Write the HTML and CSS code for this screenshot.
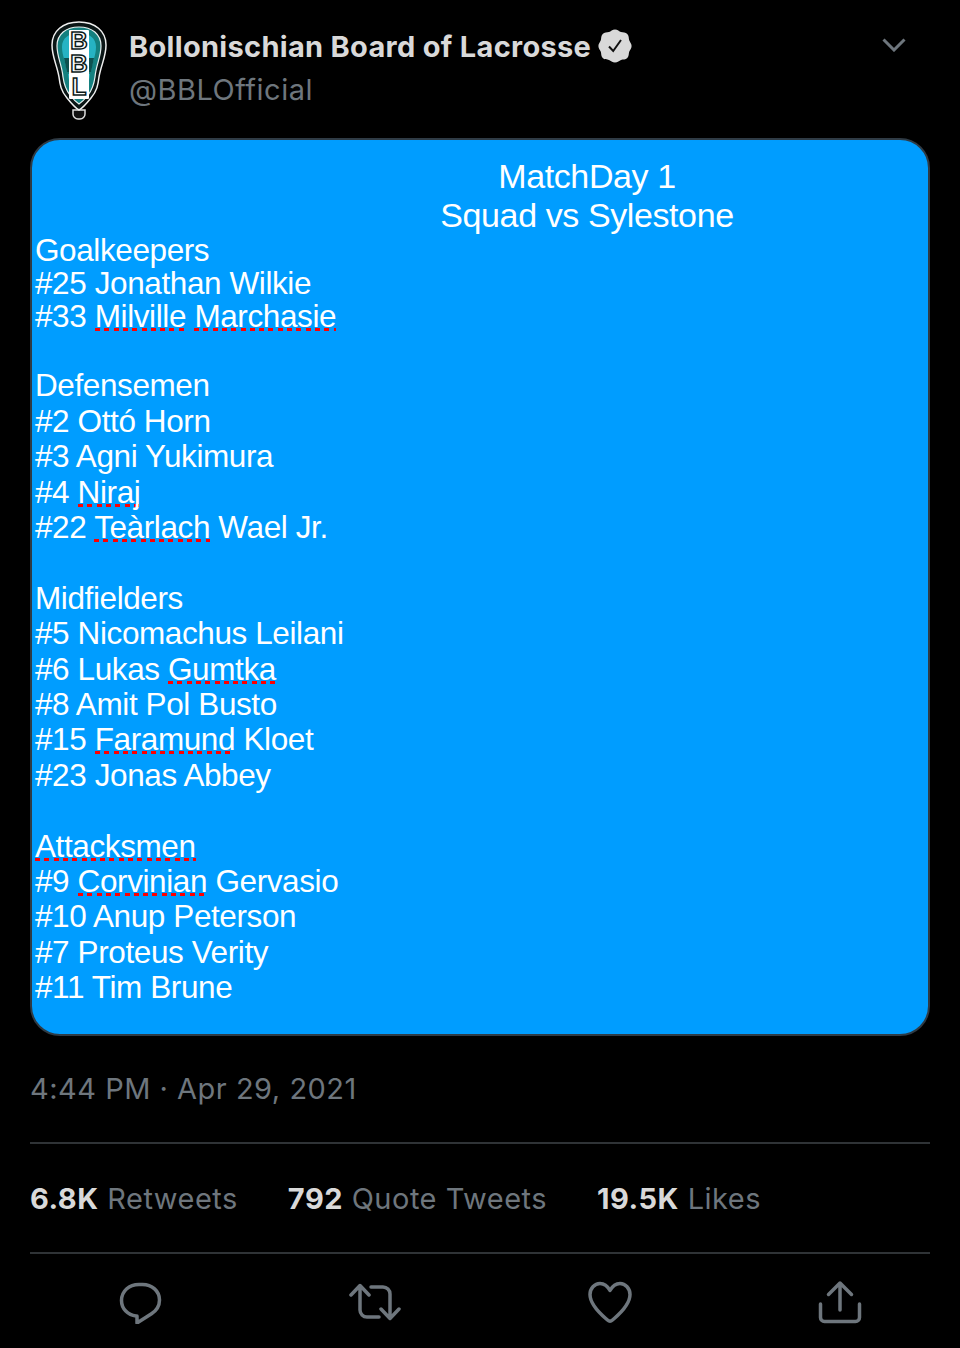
FILE: index.html
```html
<!DOCTYPE html>
<html lang="en">
<head>
<meta charset="utf-8">
<title>Tweet</title>
<link rel="stylesheet" href="styles.css">
</head>
<body>
<main class="tweet">
  <header class="head">
    <svg class="logo" viewBox="0 0 60 100" width="60" height="100">
      <path class="logo-tab" d="M24 90h12v4a5 5 0 0 1-5 5h-2a5 5 0 0 1-5-5z"/>
      <path class="logo-outer" d="M30 2C14 2 3 11 3 25c0 12 5 20 7 32 1 8 2 14 8 21 4 5 8 10 12 12 4-2 8-7 12-12 6-7 7-13 8-21 2-12 7-20 7-32C57 11 46 2 30 2z"/>
      <path class="logo-teal" d="M30 7C17 7 8 14 8 26c0 11 5 19 6 31 1 7 2 12 7 18 3 4 6 7 9 9 3-2 6-5 9-9 5-6 6-11 7-18 1-12 6-20 6-31C52 14 43 7 30 7z"/>
      <path class="logo-light" d="M30 13c-10 0-17 5-17 14 0 9 4 15 5 25h24c1-10 5-16 5-25 0-9-7-14-17-14z"/>
      <path class="logo-band" d="M15 38h30l-3 14H18z"/>
      <path class="logo-light" d="M19 54h22c-1 9-3 14-6 18-2 2-3 4-5 5-2-1-3-3-5-5-3-4-5-9-6-18z"/>
      <rect class="logo-strip" x="20" y="10" width="20" height="69" rx="1"/>
      <text class="logo-letter" x="30" y="29">B</text>
      <text class="logo-letter" x="30" y="52">B</text>
      <text class="logo-letter" x="30" y="75">L</text>
    </svg>
    <div class="names">
      <div class="name-row">
        <span class="name">Bollonischian Board of Lacrosse</span>
        <svg class="badge" viewBox="0 0 34 34" width="34" height="34">
          <path class="badge-fill" d="M17 0.5c2.6 0 4.3 2 6 2.6 2 .6 4.700.1 6.300 1.900 1.800 1.700 1.300 4.300 1.900 6.200.6 1.800 2.400 3.300 2.400 5.800s-1.800 4-2.400 5.800c-.6 1.900-.1 4.500-1.900 6.200-1.600 1.800-4.300 1.300-6.300 1.900-1.700.6-3.400 2.600-6 2.600s-4.300-2-6-2.600c-2-.6-4.700-.1-6.300-1.900-1.800-1.700-1.300-4.300-1.900-6.200C2.200 21 .4 19.500.4 17s1.800-4 2.400-5.800c.6-1.900.1-4.500 1.900-6.200C6.300 3.200 9 3.700 11 3.100c1.700-.6 3.400-2.600 6-2.600z"/>
          <path class="badge-check" d="M11 17.500l4.200 4.500 7.800-11"/>
        </svg>
      </div>
      <div class="handle">@BBLOfficial</div>
    </div>
    <svg class="chevron" viewBox="0 0 24 14" width="24" height="14"><path d="M1.500 1.500L12 12 22.500 1.500"/></svg>
  </header>

  <section class="card">
    <div class="card-title">MatchDay 1<br>Squad vs Sylestone</div>
    <div class="group first">Goalkeepers<br>#25 Jonathan Wilkie<br>#33 <span class="sp">Milville</span> <span class="sp">Marchasie</span></div>
    <div class="group">Defensemen<br>#2 Ottó Horn<br>#3 Agni Yukimura<br>#4 <span class="sp">Niraj</span><br>#22 <span class="sp">Teàrlach</span> Wael Jr.</div>
    <div class="group">Midfielders<br>#5 Nicomachus Leilani<br>#6 Lukas <span class="sp">Gumtka</span><br>#8 Amit Pol Busto<br>#15 <span class="sp">Faramund</span> Kloet<br>#23 Jonas Abbey</div>
    <div class="group"><span class="sp">Attacksmen</span><br>#9 <span class="sp">Corvinian</span> Gervasio<br>#10 Anup Peterson<br>#7 Proteus Verity<br>#11 Tim Brune</div>
  </section>

  <div class="time">4:44 PM · Apr 29, 2021</div>

  <div class="stats">
    <span><b>6.8K</b> Retweets</span>
    <span><b>792</b> Quote Tweets</span>
    <span><b>19.5K</b> Likes</span>
  </div>

  <nav class="actions">
    <svg class="act" viewBox="0 0 44 44" width="44" height="44"><path d="M20 4.500h3.500C33 4.500 40.500 11 40.500 20c0 6-3 10.500-8 13.800L18 43v-7h-1C9 35 2.500 29 2.500 20.500 2.500 11 10 4.500 20 4.500z"/></svg>
    <svg class="act" viewBox="0 0 52 40" width="52" height="40"><path d="M2 13L11 3.500 20 13M11 4.500V28a7 7 0 0 0 7 7h12M50 27l-9 9.500L32 27M41 35.500V12a7 7 0 0 0-7-7H22"/></svg>
    <svg class="act" viewBox="0 0 44 44" width="44" height="44"><path d="M22 10.500C19.500 6 16 3.500 12 3.500 6.500 3.500 2 8.500 2 14.500 2 26 15 36 19.500 40c1.500 1.300 3.500 1.300 5 0C29 36 42 26 42 14.500 42 8.500 37.500 3.500 32 3.500c-4 0-7.500 2.500-10 7z"/></svg>
    <svg class="act" viewBox="0 0 44 44" width="44" height="44"><path d="M22 30V3M10.500 14.500L22 3l11.500 11.500M2.500 24v13.500a4 4 0 0 0 4 4h31a4 4 0 0 0 4-4V24"/></svg>
  </nav>
</main>
</body>
</html>
```

FILE: styles.css
```css
html, body { margin: 0; padding: 0; background: #000; }
body { width: 960px; height: 1348px; overflow: hidden; font-family: Inter, "Liberation Sans", sans-serif; }
.tweet { padding: 0 30px; box-sizing: border-box; width: 960px; }

.head { display: flex; align-items: flex-start; height: 138px; }
.logo { margin: 20px 0 0 19px; flex: none; }
.logo-tab { fill: #111; stroke: #ddd; stroke-width: 1.500; }
.logo-outer { fill: #0b1616; stroke: #eee; stroke-width: 1.500; }
.logo-teal { fill: #14807f; stroke: #e8f0f0; stroke-width: 1.200; }
.logo-light { fill: #26b3c4; }
.logo-band { fill: #0d5150; }
.logo-strip { fill: #fff; }
.logo-letter { font: 700 24px "Liberation Sans", sans-serif; fill: #fff; stroke: #0b1a1a; stroke-width: 1.500; paint-order: normal; text-anchor: middle; }

.names { margin-left: 20px; flex: 1; padding-top: 24px; }
.name-row { display: flex; align-items: center; height: 44px; }
.name { color: #d9d9d9; font-weight: 700; font-size: 29px; letter-spacing: 0.300px; }
.badge { margin-left: 7px; flex: none; }
.badge-fill { fill: #d9d9d9; }
.badge-check { fill: none; stroke: #111; stroke-width: 2; }
.handle { color: #6e767d; font-size: 29px; line-height: 44px; letter-spacing: 0.500px; }
.chevron { margin: 38px 24px 0 0; flex: none; }
.chevron path { fill: none; stroke: #6e767d; stroke-width: 3; }

.card { box-sizing: border-box; width: 900px; height: 898px; margin-top: 0; background: #009dff; border: 2px solid #2f3b45; border-radius: 30px; padding: 17px 3px 0; color: #fff; font-family: "Liberation Sans", sans-serif; font-size: 31.500px; letter-spacing: -0.400px; }
.card-title { text-align: center; font-size: 34px; line-height: 38.500px; margin-left: 214px; }
.group { line-height: 35.400px; margin-bottom: 35.400px; }
.group.first { line-height: 33px; }
.sp { background: repeating-linear-gradient(90deg, #f00 0 5px, transparent 5px 9.300px) left bottom 3px / 100% 3px no-repeat; }

.time { color: #6e767d; font-size: 29px; letter-spacing: 0.500px; line-height: 44px; margin-top: 31px; }
.stats { display: flex; gap: 50px; margin-top: 31px; border-top: 2px solid #2f3336; border-bottom: 2px solid #2f3336; height: 108px; align-items: center; color: #6e767d; font-size: 29px; letter-spacing: 0.500px; }
.stats b { color: #d9d9d9; font-weight: 700; }
.actions { display: flex; justify-content: space-between; align-items: center; padding: 0 68px 0 89px; height: 96px; }
.act path { fill: none; stroke: #6e767d; stroke-width: 3.500; stroke-linecap: round; stroke-linejoin: round; }
```
